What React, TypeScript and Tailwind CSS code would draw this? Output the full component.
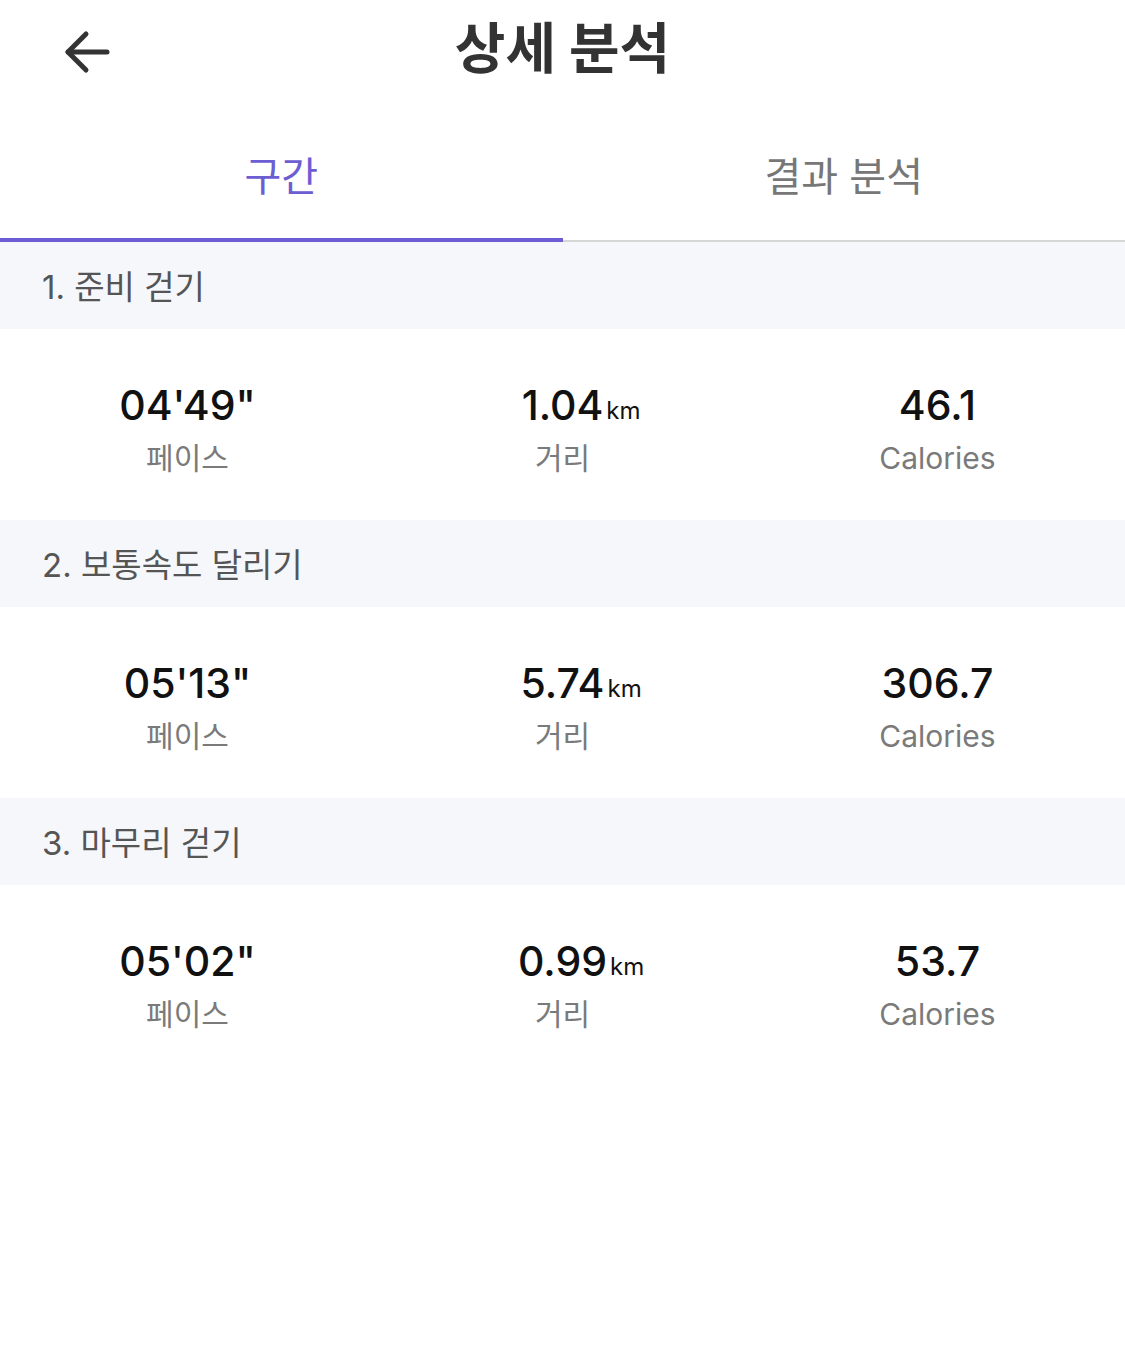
const sections = [
  { title: '1. 준비 걷기', pace: `04'49"`, dist: '1.04', cal: '46.1' },
  { title: '2. 보통속도 달리기', pace: `05'13"`, dist: '5.74', cal: '306.7' },
  { title: '3. 마무리 걷기', pace: `05'02"`, dist: '0.99', cal: '53.7' },
];

const font = { fontFamily: '"Inter", "Noto Sans CJK KR", sans-serif' };

function Stat({ value, unit, label }: { value: string; unit?: string; label: string }) {
  return (
    <div className="flex flex-col items-center">
      <div className="relative text-[41px] leading-[48px] font-medium text-[#111]">
        {value}
        {unit && (
          <span className="absolute bottom-[3px] left-full ml-[3px] text-[24px] leading-[30px] font-normal">
            {unit}
          </span>
        )}
      </div>
      <div className="mt-[9px] text-[30px] leading-[40px] text-[#7a7a7a]">{label}</div>
    </div>
  );
}

export default function App() {
  return (
    <div className="min-h-[1362px] w-[1125px] bg-white" style={font}>
      <header className="grid h-[94px] grid-cols-[1fr_auto_1fr] items-center">
        <button className="ml-[62px] mt-[10px] flex h-[48px] w-[50px] items-center justify-start">
          <svg width="50" height="48" viewBox="0 0 50 48" fill="none" stroke="#333" strokeWidth="5" strokeLinecap="round" strokeLinejoin="round">
            <polyline points="24,6 6,24 24,42" />
            <line x1="6" y1="24" x2="45" y2="24" />
          </svg>
        </button>
        <h1 className="mt-[2px] text-[55px] font-bold leading-[62px] text-[#333]">상세 분석</h1>
        <div />
      </header>

      <nav className="grid grid-cols-2">
        <div className="flex h-[148px] justify-center border-b-4 border-[#6c5dd3] pt-[60px]">
          <span className="text-[40px] leading-[46px] text-[#6c5dd3]">구간</span>
        </div>
        <div className="flex h-[148px] justify-center pt-[60px]">
          <div className="flex w-full flex-col items-center">
            <span className="text-[40px] leading-[46px] text-[#777]">결과 분석</span>
            <div className="mt-auto h-[2px] w-full bg-[#d6d6d6]" />
          </div>
        </div>
      </nav>

      {sections.map((s) => (
        <section key={s.title}>
          <div className="flex h-[87px] items-center bg-[#f6f7fb] px-[42px] pt-[2px]">
            <span className="text-[33px] leading-[40px] text-[#555]">{s.title}</span>
          </div>
          <div className="grid h-[191px] grid-cols-3 items-center pt-[10px]">
            <Stat value={s.pace} label="페이스" />
            <Stat value={s.dist} unit="km" label="거리" />
            <Stat value={s.cal} label="Calories" />
          </div>
        </section>
      ))}
    </div>
  );
}
